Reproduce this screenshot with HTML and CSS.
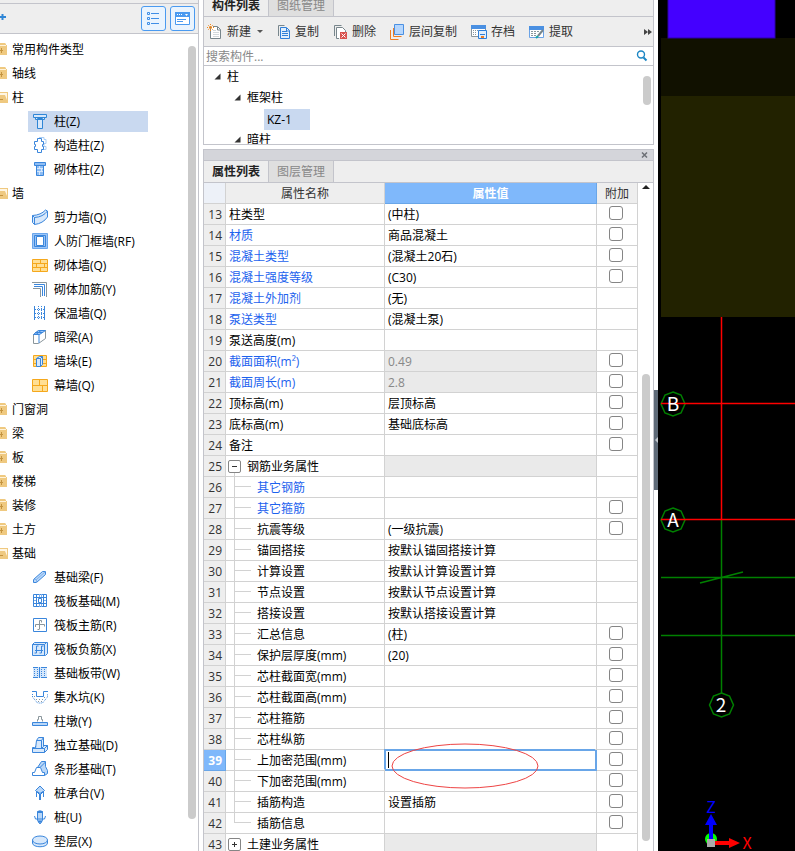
FILE: index.html
```html
<!DOCTYPE html>
<html lang="zh-CN">
<head>
  <meta charset="UTF-8">
  <title>构件属性</title>
  <link rel="stylesheet" href="styles.css">
</head>
<body>

<div class="app">

  <!-- Navigation tree -->
  <nav class="nav">
    <div class="nav-top"></div>
    <div class="nav-bar">
      <svg class="plus" width="7" height="8" viewBox="0 0 7 8"><path d="M0 4h6M2.500 1v6" stroke="#2f86d6" stroke-width="2"/></svg>
      <button type="button" class="view-btn" aria-label="列表">
        <svg width="13" height="14" viewBox="0 0 13 14" fill="none" stroke="#3f8ee6"><path d="M.5 .5h2v2h-2zM.5 5.500h2v2h-2zM.5 10.500h2v2h-2zM4 1.500h8M4 6.500h8M4 11.500h8"/></svg>
      </button>
      <button type="button" class="view-btn" aria-label="窗口">
        <svg width="15" height="13" viewBox="0 0 15 13"><path d="M.5 .5h14v12H.5z" fill="#fff" stroke="#4a9af0"/><path d="M0 0h15v5H0z" fill="#4a9af0"/><path d="M2 2h1v1H2zM4 2h1v1H4zM6 2h1v1H6zM10 2h3l-1.500 2z" fill="#fff"/><path d="M2 7.500h9M2 9.500h6" stroke="#4a9af0"/></svg>
      </button>
    </div>
    <div class="nav-body">
      <ul class="nav-tree">
        <li class="group"><svg class="folder" width="8" height="14" viewBox="0 0 8 14"><path d="M0 1h5l1 1v1h1v10H0z" fill="#efc980"/><path d="M0 3.500h6" stroke="#fff3da"/><path d="M0 8.500h3M1.500 6v5" stroke="#c4933f"/></svg>常用构件类型</li>
        <li class="group"><svg class="folder" width="8" height="14" viewBox="0 0 8 14"><path d="M0 1h5l1 1v1h1v10H0z" fill="#efc980"/><path d="M0 3.500h6" stroke="#fff3da"/><path d="M0 8.500h3M1.500 6v5" stroke="#c4933f"/></svg>轴线</li>
        <li class="group"><svg class="folder" width="8" height="14" viewBox="0 0 8 14"><path d="M0 2h8v11H0z" fill="#efc980"/><path d="M0 3h7v7L5 5H0z" fill="#fff6e4"/><path d="M0 9.500h3" stroke="#c4933f"/></svg>柱</li>
        <li class="item selected"><svg width="16" height="16" viewBox="0 0 16 16" fill="#d7e8fb" stroke="#2f86d6"><path d="M1.500 1.500h13v3h-2v2h-9v-2h-2zM5.500 5.500h5v10h-5z"/><path d="M3 4.500h10"/></svg>柱(Z)</li>
        <li class="item"><svg width="16" height="16" viewBox="0 0 16 16" fill="#fff" stroke="#3a86dc"><path d="M7 .5h5v2h2v4h-2v3h2v3h-3" stroke="#a9cdf4"/><path d="M5.500 1.500h4v3h2v3h-1v2h1v3h-2v3h-4v-3h-3v-3h1v-2h-1v-3h3z"/></svg>构造柱(Z)</li>
        <li class="item"><svg width="16" height="16" viewBox="0 0 16 16" fill="#8fbdf3" stroke="#3a86dc"><path d="M2.500 1.500h11v3h-11zM4.500 4.500h7v10h-7z"/><path d="M5 7.500h6M5 10.500h6M7.500 5v2M9.500 8v2M7.500 11v3" stroke="#d7e8fb"/></svg>砌体柱(Z)</li>
        <li class="group"><svg class="folder" width="8" height="14" viewBox="0 0 8 14"><path d="M0 2h8v11H0z" fill="#efc980"/><path d="M0 3h7v7L5 5H0z" fill="#fff6e4"/><path d="M0 9.500h3" stroke="#c4933f"/></svg>墙</li>
        <li class="item"><svg width="16" height="16" viewBox="0 0 16 16" fill="#d7e8fb" stroke="#3a86dc"><path d="M.5 6.500Q9 6 13.500 1l2 1v6Q11 14.500 2.500 15.500l-2-2z"/><path d="M.5 6.500l2 2Q11 8 15.500 2M2.500 8.500v7" fill="none"/></svg>剪力墙(Q)</li>
        <li class="item"><svg width="16" height="16" viewBox="0 0 16 16" stroke="#3a86dc"><path d="M.5 .5h15v15H.5z" fill="#9cc5f7" stroke="#6aa6ec"/><path d="M2.500 2.500h11v11h-11z" fill="#9cc5f7"/><path d="M4.500 3.500h7v9h-7z" fill="#fff"/></svg>人防门框墙(RF)</li>
        <li class="item"><svg width="16" height="14" viewBox="0 0 16 14" fill="#ffdf94" stroke="#f5a81c"><path d="M.5 1.500h15v12H.5z"/><path d="M0 5.500h16M0 9.500h16M8.500 1v4M4.500 5v4M12.500 5v4M8.500 9v4"/></svg>砌体墙(Q)</li>
        <li class="item"><svg width="16" height="16" viewBox="0 0 16 16" fill="none"><path d="M0 1.500h14.500V16M1 7.500h7.500V16" stroke="#8a969c"/><path d="M2 3.500h10.500V15M2 5.500h8.500V15" stroke="#3a86dc"/></svg>砌体加筋(Y)</li>
        <li class="item"><svg width="16" height="16" viewBox="0 0 16 16" stroke="#3a86dc"><path d="M2.500 1v14M12.500 1v14"/><path d="M6.500 1v14M9.500 1v14M3 4.500h10M3 8.500h10M3 12.500h10" stroke-dasharray="1 1"/></svg>保温墙(Q)</li>
        <li class="item"><svg width="16" height="16" viewBox="0 0 16 16"><path d="M1.500 5.500l5-4h7v8l-7 5h-5z" fill="#fff" stroke="#8a969c"/><path d="M1.500 5.500l5-4h7l-6 4zM7 5v9M3 3.500h8M4 5.500l5-4" fill="#9cc5f7" stroke="#3a86dc"/></svg>暗梁(A)</li>
        <li class="item"><svg width="16" height="14" viewBox="0 0 16 14"><path d="M1.500 1.500h13v11h-13z" fill="#ffdf94" stroke="#f5a81c"/><path d="M1 5.500h14M1 9.500h14" stroke="#f5a81c"/><path d="M4.500 4.500l3-2h3v8l-2 2h-4zM4.500 4.500h4v8M8.500 4.500l2-2" fill="#d7e8fb" stroke="#3a86dc"/></svg>墙垛(E)</li>
        <li class="item"><svg width="16" height="14" viewBox="0 0 16 14" fill="#ffdf94" stroke="#f5a81c"><path d="M.5 1.500h15v12H.5z"/><path d="M0 7.500h16M7.500 1v6M10.500 7v6"/></svg>幕墙(Q)</li>
        <li class="group"><svg class="folder" width="8" height="14" viewBox="0 0 8 14"><path d="M0 1h5l1 1v1h1v10H0z" fill="#efc980"/><path d="M0 3.500h6" stroke="#fff3da"/><path d="M0 8.500h3M1.500 6v5" stroke="#c4933f"/></svg>门窗洞</li>
        <li class="group"><svg class="folder" width="8" height="14" viewBox="0 0 8 14"><path d="M0 1h5l1 1v1h1v10H0z" fill="#efc980"/><path d="M0 3.500h6" stroke="#fff3da"/><path d="M0 8.500h3M1.500 6v5" stroke="#c4933f"/></svg>梁</li>
        <li class="group"><svg class="folder" width="8" height="14" viewBox="0 0 8 14"><path d="M0 1h5l1 1v1h1v10H0z" fill="#efc980"/><path d="M0 3.500h6" stroke="#fff3da"/><path d="M0 8.500h3M1.500 6v5" stroke="#c4933f"/></svg>板</li>
        <li class="group"><svg class="folder" width="8" height="14" viewBox="0 0 8 14"><path d="M0 1h5l1 1v1h1v10H0z" fill="#efc980"/><path d="M0 3.500h6" stroke="#fff3da"/><path d="M0 8.500h3M1.500 6v5" stroke="#c4933f"/></svg>楼梯</li>
        <li class="group"><svg class="folder" width="8" height="14" viewBox="0 0 8 14"><path d="M0 1h5l1 1v1h1v10H0z" fill="#efc980"/><path d="M0 3.500h6" stroke="#fff3da"/><path d="M0 8.500h3M1.500 6v5" stroke="#c4933f"/></svg>装修</li>
        <li class="group"><svg class="folder" width="8" height="14" viewBox="0 0 8 14"><path d="M0 1h5l1 1v1h1v10H0z" fill="#efc980"/><path d="M0 3.500h6" stroke="#fff3da"/><path d="M0 8.500h3M1.500 6v5" stroke="#c4933f"/></svg>土方</li>
        <li class="group"><svg class="folder" width="8" height="14" viewBox="0 0 8 14"><path d="M0 2h8v11H0z" fill="#efc980"/><path d="M0 3h7v7L5 5H0z" fill="#fff6e4"/><path d="M0 9.500h3" stroke="#c4933f"/></svg>基础</li>
        <li class="item"><svg width="16" height="16" viewBox="0 0 16 16" fill="#b9d7f8" stroke="#3a86dc"><path d="M1.500 10.500l9-8h3v3l-9 8h-3z"/><path d="M1.500 10.500h3v3M4.500 10.500l9-8" fill="none" stroke="#7fb0ec"/></svg>基础梁(F)</li>
        <li class="item"><svg width="16" height="16" viewBox="0 0 16 16" fill="none" stroke="#3a86dc"><path d="M1.500 1.500h13v12h-13zM4.500 1v13M11.500 1v13M1 4.500h14M1 10.500h14M6.500 5.500h3v4h-3z"/><path d="M7.500 1v3M9.500 1v3M7.500 11v3M9.500 11v3M2 7.500h2M12 7.500h2" stroke="#7fb0ec"/></svg>筏板基础(M)</li>
        <li class="item"><svg width="16" height="16" viewBox="0 0 16 16" fill="none"><path d="M1.500 1.500h13v13h-13z" stroke="#3a86dc"/><path d="M7.500 12V3.500h2v2M3.500 10V7.500h9v2M5.500 12.500h2" stroke="#8a969c"/></svg>筏板主筋(R)</li>
        <li class="item"><svg width="16" height="16" viewBox="0 0 16 16" fill="#d7e8fb" stroke="#3a86dc"><path d="M.5 3.500l2-2h13v11l-2 2H.5z"/><path d="M.5 3.500h12v11M12.500 3.500l2-2M4.500 5v7M9.500 5v7M3 9.500h8M4.500 5h2M4.500 12h-2M9.500 5h2M9.500 12h-2" fill="none"/></svg>筏板负筋(X)</li>
        <li class="item"><svg width="16" height="14" viewBox="0 0 16 14" stroke="#3a86dc"><path d="M1 1h14v11H1z" fill="#d7e8fb" stroke="none"/><path d="M1 1.500h5M9 1.500h6M1 11.500h5M9 11.500h6"/><path d="M2.500 1v11M5.500 1v11M9.500 1v11M12.500 1v11" stroke-dasharray="1 1"/><path d="M7.500 1v11"/></svg>基础板带(W)</li>
        <li class="item"><svg width="16" height="16" viewBox="0 0 16 16" fill="none"><path d="M0 2.500h4.500v5h7v-5H16" stroke="#3a86dc"/><path d="M.5 5v3l5 6h5l5-6V5" stroke="#3a86dc" stroke-dasharray="1 1"/><path d="M2 7.500h2M4 10.500h8M6 12.500h4M12 8.500h2" stroke="#8a969c" stroke-dasharray="1 2"/></svg>集水坑(K)</li>
        <li class="item"><svg width="16" height="12" viewBox="0 0 16 12"><path d="M5.500 6.500v-2h1v-3h3v3h1v2" fill="#fff" stroke="#8a969c"/><path d="M.5 7.500h15v3H.5z" fill="#b9d7f8" stroke="#3a86dc"/></svg>柱墩(Y)</li>
        <li class="item"><svg width="16" height="17" viewBox="0 0 16 17" fill="#d7e8fb" stroke="#3a86dc"><path d="M.5 11.500h2l2-2h11v4l-3 3H.5z"/><path d="M.5 12.500h12v4M12.500 12.500l3-3" fill="none"/><path d="M4.500 4.500l2-3h5v9l-2 2h-6zM4.500 4.500h5v8M9.500 4.500l2-3"/></svg>独立基础(D)</li>
        <li class="item"><svg width="16" height="17" viewBox="0 0 16 17" fill="#b9d7f8" stroke="#3a86dc"><path d="M5.500 7.500l4-6h4v5l2 4v3l-3 2z"/><path d="M.5 15.500v-3h2l2-5h4l2 5h2v3z" fill="#fff"/><path d="M8.500 7l5-5" fill="none"/></svg>条形基础(T)</li>
        <li class="item"><svg width="16" height="16" viewBox="0 0 16 16" fill="#b9d7f8" stroke="#3a86dc"><path d="M8 1l4.500 4.500L8 10 3.500 5.500z"/><path d="M4.500 7v5M11.500 7v5M7.500 10v5M8.500 10v5M5 6.500l3 2 3-2" fill="none"/></svg>桩承台(V)</li>
        <li class="item"><svg width="16" height="16" viewBox="0 0 16 16" fill="#b9d7f8" stroke="#3a86dc"><path d="M5.500 2.500Q8 1 10.500 2.500v9L8 15l-2.500-3.500z"/><path d="M5.500 3h5M6 12.500h4" stroke-width="2"/><path d="M2.500 7l1 3h9l1-3" fill="none"/></svg>桩(U)</li>
        <li class="item"><svg width="16" height="14" viewBox="0 0 16 14" fill="#d7e8fb" stroke="#3a86dc"><path d="M.5 6v3c0 5 15 5 15 0V6"/><ellipse cx="8" cy="6" rx="7.500" ry="4"/></svg>垫层(X)</li>
      </ul>
      <div class="thumb nav-thumb"></div>
    </div>
  </nav>

  <main class="middle">

    <!-- Component list -->
    <section class="panel list-panel">
      <div class="tabs tabs-clipped">
        <button type="button" class="tab active">构件列表</button>
        <button type="button" class="tab">图纸管理</button>
      </div>
      <div class="toolbar">
        <button type="button" class="tool"><svg width="16" height="16" viewBox="0 0 16 16"><path d="M3.500 3v11.500h10v-9l-3-3H6" fill="#fff" stroke="#78868c"/><path d="M10.500 3v3h3" fill="none" stroke="#78868c"/><path d="M6 6.500h3M6 8.500h6M6 10.500h6M6 12.500h6" stroke="#d3d9dc"/><path d="M1 1l5 5M6 1L1 6M3.500 0v7M0 3.500h7" stroke="#f28a1c" stroke-dasharray="1 1"/></svg>新建<span class="caret-down"></span></button>
        <button type="button" class="tool"><svg width="14" height="16" viewBox="0 0 14 16"><path d="M1.500 12V1.500h6" fill="none" stroke="#78868c"/><path d="M3.500 3.500h6l3 3v8h-9z" fill="#e1eefc" stroke="#2f7fd8"/><path d="M5 7.500h5M5 9.500h6M5 11.500h6M9.500 4v3h3" fill="none" stroke="#2f7fd8"/></svg>复制</button>
        <button type="button" class="tool"><svg width="15" height="16" viewBox="0 0 15 16" fill="#fff" stroke="#78868c"><path d="M1.500 12V1.500h7" fill="none"/><path d="M6 14.500H3.500v-11h6l3 3v2"/><path d="M7 8h7v7H7z" fill="#d9534f" stroke="none"/><path d="M8.500 9.500l4 4M12.500 9.500l-4 4" stroke="#fff"/></svg>删除</button>
        <button type="button" class="tool"><svg width="15" height="16" viewBox="0 0 15 16" fill="none"><path d="M.5 6v9.500h8M3.500 4v8.500h8" stroke="#ee7d23"/><path d="M4.500 .5h9v10h-9z" fill="#b5d6fd" stroke="#4a90e2"/></svg>层间复制</button>
        <button type="button" class="tool"><svg width="16" height="16" viewBox="0 0 16 16"><path d="M.5 1.500h14v11H.5z" fill="#fff" stroke="#8a969c"/><path d="M0 1h15v4H0z" fill="#4a90e2"/><path d="M2 6.500h5M2 8.500h4M2 10.500h4" stroke="#8a969c" stroke-dasharray="1 1"/><path d="M7.500 6.500h8v8h-8z" fill="#e1eefc" stroke="#2f7fd8"/><path d="M9 10.500h5" stroke="#2f7fd8"/><path d="M10 12h3v2h-3z" fill="#ee7d23"/></svg>存档</button>
        <button type="button" class="tool"><svg width="16" height="14" viewBox="0 0 16 14"><path d="M.5 1.500h14v11H.5z" fill="#fff" stroke="#6ba3e6"/><path d="M0 1h15v4H0z" fill="#4a90e2"/><path d="M2 6.500h8M2 8.500h6M2 10.500h5" stroke="#8a969c" stroke-dasharray="2 1"/><path d="M14 5l-5 6" stroke="#78868c" stroke-width="2"/><path d="M9 11l-2 2" stroke="#1ba5a5" stroke-width="2"/></svg>提取</button>
        <button type="button" class="more" aria-label="更多"><svg width="8" height="6" viewBox="0 0 8 6" fill="#444"><path d="M0 0l4 3-4 3zM4 0l4 3-4 3z"/></svg></button>
      </div>
      <div class="search">
        <input type="text" placeholder="搜索构件..." aria-label="搜索构件">
        <svg width="12" height="12" viewBox="0 0 12 12" fill="none" stroke="#1c86c4"><circle cx="5" cy="4.500" r="3.500" stroke-width="1.400"/><path d="M7.500 7.500l3 3" stroke-width="2"/></svg>
      </div>
      <div class="list-body">
        <ul class="list-tree">
          <li class="level1"><svg width="7" height="7" viewBox="0 0 7 7"><path d="M6.500 .5v6h-6z" fill="#333"/></svg>柱</li>
          <li class="level2"><svg width="7" height="7" viewBox="0 0 7 7"><path d="M6.500 .5v6h-6z" fill="#333"/></svg>框架柱</li>
          <li class="level3"><span>KZ-1</span></li>
          <li class="level2"><svg width="7" height="7" viewBox="0 0 7 7"><path d="M6.500 .5v6h-6z" fill="#333"/></svg>暗柱</li>
        </ul>
        <div class="thumb list-thumb"></div>
      </div>
    </section>

    <!-- Properties -->
    <section class="panel prop-panel">
      <div class="title-bar">
        <button type="button" aria-label="关闭"><svg width="7" height="6" viewBox="0 0 7 6"><path d="M1 .5l5 5M6 .5l-5 5" stroke="#6d7076" stroke-width="1.500"/></svg></button>
      </div>
      <div class="tabs">
        <button type="button" class="tab active">属性列表</button>
        <button type="button" class="tab">图层管理</button>
      </div>
      <div class="prop-body">
        <table class="props">
          <colgroup><col class="col-no"><col class="col-name"><col><col class="col-extra"></colgroup>
          <thead>
            <tr><th class="corner"></th><th>属性名称</th><th class="current">属性值</th><th>附加</th></tr>
          </thead>
          <tbody>
            <tr><th>13</th><td>柱类型</td><td>(中柱)</td><td class="extra"><input type="checkbox" aria-label="附加 柱类型"></td></tr>
            <tr><th>14</th><td class="blue">材质</td><td>商品混凝土</td><td class="extra"><input type="checkbox" aria-label="附加 材质"></td></tr>
            <tr><th>15</th><td class="blue">混凝土类型</td><td>(混凝土20石)</td><td class="extra"><input type="checkbox" aria-label="附加 混凝土类型"></td></tr>
            <tr><th>16</th><td class="blue">混凝土强度等级</td><td>(C30)</td><td class="extra"><input type="checkbox" aria-label="附加 混凝土强度等级"></td></tr>
            <tr><th>17</th><td class="blue">混凝土外加剂</td><td>(无)</td><td></td></tr>
            <tr><th>18</th><td class="blue">泵送类型</td><td>(混凝土泵)</td><td></td></tr>
            <tr><th>19</th><td>泵送高度(m)</td><td></td><td></td></tr>
            <tr><th>20</th><td class="blue">截面面积(m²)</td><td class="locked">0.49</td><td class="extra"><input type="checkbox" aria-label="附加 截面面积"></td></tr>
            <tr><th>21</th><td class="blue">截面周长(m)</td><td class="locked">2.8</td><td class="extra"><input type="checkbox" aria-label="附加 截面周长"></td></tr>
            <tr><th>22</th><td>顶标高(m)</td><td>层顶标高</td><td class="extra"><input type="checkbox" aria-label="附加 顶标高"></td></tr>
            <tr><th>23</th><td>底标高(m)</td><td>基础底标高</td><td class="extra"><input type="checkbox" aria-label="附加 底标高"></td></tr>
            <tr><th>24</th><td>备注</td><td></td><td class="extra"><input type="checkbox" aria-label="附加 备注"></td></tr>
            <tr><th>25</th><td class="parent open"><button type="button" class="toggle" aria-label="收起"><svg width="7" height="7" viewBox="0 0 7 7"><path d="M1 3.500h5" stroke="#333"/></svg></button>钢筋业务属性</td><td class="locked"></td><td></td></tr>
            <tr><th>26</th><td class="child blue">其它钢筋</td><td></td><td></td></tr>
            <tr><th>27</th><td class="child blue">其它箍筋</td><td></td><td class="extra"><input type="checkbox" aria-label="附加 其它箍筋"></td></tr>
            <tr><th>28</th><td class="child">抗震等级</td><td>(一级抗震)</td><td class="extra"><input type="checkbox" aria-label="附加 抗震等级"></td></tr>
            <tr><th>29</th><td class="child">锚固搭接</td><td>按默认锚固搭接计算</td><td></td></tr>
            <tr><th>30</th><td class="child">计算设置</td><td>按默认计算设置计算</td><td></td></tr>
            <tr><th>31</th><td class="child">节点设置</td><td>按默认节点设置计算</td><td></td></tr>
            <tr><th>32</th><td class="child">搭接设置</td><td>按默认搭接设置计算</td><td></td></tr>
            <tr><th>33</th><td class="child">汇总信息</td><td>(柱)</td><td class="extra"><input type="checkbox" aria-label="附加 汇总信息"></td></tr>
            <tr><th>34</th><td class="child">保护层厚度(mm)</td><td>(20)</td><td class="extra"><input type="checkbox" aria-label="附加 保护层厚度"></td></tr>
            <tr><th>35</th><td class="child">芯柱截面宽(mm)</td><td></td><td class="extra"><input type="checkbox" aria-label="附加 芯柱截面宽"></td></tr>
            <tr><th>36</th><td class="child">芯柱截面高(mm)</td><td></td><td class="extra"><input type="checkbox" aria-label="附加 芯柱截面高"></td></tr>
            <tr><th>37</th><td class="child">芯柱箍筋</td><td></td><td class="extra"><input type="checkbox" aria-label="附加 芯柱箍筋"></td></tr>
            <tr><th>38</th><td class="child">芯柱纵筋</td><td></td><td class="extra"><input type="checkbox" aria-label="附加 芯柱纵筋"></td></tr>
            <tr><th class="current">39</th><td class="child">上加密范围(mm)</td><td class="editing"><input type="text" aria-label="上加密范围(mm)"><svg class="mark" width="148" height="46" viewBox="0 0 148 46"><ellipse cx="74" cy="23" rx="73" ry="22" fill="none" stroke="#ee4444"/></svg></td><td class="extra"><input type="checkbox" aria-label="附加 上加密范围"></td></tr>
            <tr><th>40</th><td class="child">下加密范围(mm)</td><td></td><td class="extra"><input type="checkbox" aria-label="附加 下加密范围"></td></tr>
            <tr><th>41</th><td class="child">插筋构造</td><td>设置插筋</td><td class="extra"><input type="checkbox" aria-label="附加 插筋构造"></td></tr>
            <tr><th>42</th><td class="child last">插筋信息</td><td></td><td class="extra"><input type="checkbox" aria-label="附加 插筋信息"></td></tr>
            <tr><th>43</th><td class="parent"><button type="button" class="toggle" aria-label="展开"><svg width="7" height="7" viewBox="0 0 7 7"><path d="M1 3.500h5M3.500 1v5" stroke="#333"/></svg></button>土建业务属性</td><td class="locked"></td><td></td></tr>
          </tbody>
        </table>
        <div class="prop-scroll">
          <svg width="8" height="4" viewBox="0 0 8 4"><path d="M4 0l4 4H0z" fill="#222"/></svg>
          <div class="thumb prop-thumb"></div>
        </div>
      </div>
    </section>
  </main>

  <div class="splitter">
    <button type="button" aria-label="折叠"><svg width="3" height="6" viewBox="0 0 3 6"><path d="M3 0v6L0 3z" fill="#c3c9cf"/></svg></button>
  </div>

  <!-- Drawing area -->
  <div class="canvas">
    <svg class="drawing" width="137" height="730">
      <rect x="3" y="38" width="2000" height="58" fill="#111100"/>
      <rect x="3" y="96" width="2000" height="221" fill="#222200"/>
      <rect x="10" y="-1" width="107" height="39" fill="#4400ff" stroke="#2c00a8"/>
      <g stroke="#008000" stroke-width="1.500" fill="none">
        <path d="M63.500 520v173M3 577.500h2000M3 635.500h2000M42 583l43-11"/>
        <path d="M15 392l8 3 4 9-4 9-8 3-8-3-4-9 4-9z"/>
        <path d="M15 508l8 3 4 9-4 9-8 3-8-3-4-9 4-9z"/>
        <path d="M63.500 693l8 3 4 9-4 9-8 3-8-3-4-9 4-9z"/>
      </g>
      <path d="M63.500 317v203M3 403.500h2000M3 519.500h2000" stroke="#ff0000" stroke-width="1.500"/>
      <g class="axis-label" fill="#fff" text-anchor="middle">
        <text x="15" y="411">B</text>
        <text x="15" y="527">A</text>
        <text x="63" y="712">2</text>
      </g>
    </svg>
    <svg class="gizmo" width="50" height="56" viewBox="0 0 50 56">
      <circle cx="8" cy="44" r="6" fill="#00ff00"/>
      <path d="M6 45V30H2l6-11 6 11h-4v15z" fill="#0000ff"/>
      <path d="M12 46h14v-3l11 5-11 5v-3H12z" fill="#ff0000"/>
      <path d="M4 44h8v8H4z" fill="#aaa"/>
      <text x="8" y="18" fill="#0000ff" text-anchor="middle">Z</text>
      <text x="44" y="54" fill="#ff0000" text-anchor="middle">X</text>
    </svg>
  </div>

</div>

</body>
</html>
```
FILE: styles.css
```css
* {
  box-sizing: border-box;
}

body {
  margin: 0;
  font-family: "Open Sans", "Noto Sans CJK SC", sans-serif;
  font-size: 12px;
  line-height: 20px;
  color: #000;
  background: #fff;
}

button {
  font: inherit;
  color: inherit;
  background: none;
  border: none;
  padding: 0;
  cursor: pointer;
}

ul {
  list-style: none;
  margin: 0;
  padding: 0;
}

svg {
  display: block;
  flex: none;
}

.app {
  display: flex;
  height: 100vh;
  overflow: hidden;
}

.thumb {
  width: 8px;
  border-radius: 4px;
  background: #cbcbcb;
}

/* Navigation tree */
.nav {
  display: flex;
  flex-direction: column;
  flex: 0 0 199px;
  border-right: 1px solid #c3c4cb;
}

.nav-top {
  flex: none;
  height: 4px;
  background: #eee;
  border-bottom: 1px solid #c3c4cb;
}

.nav-bar {
  display: flex;
  align-items: center;
  flex: none;
  gap: 4px;
  height: 30px;
  padding-right: 3px;
  background: #eee;
  border-bottom: 1px solid #c3c4cb;
}

.plus {
  margin: 0 auto 4px 0;
}

.view-btn {
  display: flex;
  align-items: center;
  justify-content: center;
  width: 25px;
  height: 25px;
  background: #eaf4fe;
  border: 1px solid #4a9af0;
  border-radius: 3px;
}

.nav-body {
  display: flex;
  flex: 1;
  min-height: 0;
}

.nav-tree {
  display: flex;
  flex-direction: column;
  flex: 1;
  padding-top: 3px;
}

.nav-tree li {
  display: flex;
  align-items: center;
  flex: none;
}

.group {
  gap: 4px;
  height: 24px;
  padding-top: 2px;
}

.folder {
  margin-bottom: 2px;
}

.item {
  gap: 6px;
  width: 120px;
  height: 21px;
  margin: 2px 0 1px 28px;
  padding-left: 4px;
  white-space: nowrap;
}

.item svg {
  margin-bottom: 2px;
}

.selected {
  background: #c9d9f0;
}

.nav-thumb {
  margin: 12px 2px 32px 0;
}

/* Middle column */
.middle {
  display: flex;
  flex-direction: column;
  flex: 0 0 451px;
  gap: 4px;
  margin-left: 4px;
}

.panel {
  display: flex;
  flex-direction: column;
  border: 1px solid #c3c4cb;
}

.list-panel {
  flex: none;
  border-top: none;
}

.prop-panel {
  flex: 1;
  min-height: 0;
  border-bottom: none;
}

.tabs {
  display: flex;
  align-items: flex-end;
  flex: none;
  height: 22px;
  overflow: hidden;
  background: #eee;
  border-bottom: 1px solid #c3c4cb;
}

.tabs-clipped {
  height: 17px;
}

.tab {
  flex: none;
  width: 65px;
  height: 21px;
  color: #888;
  background: #dfdfdf;
  border-right: 1px solid #c3c4cb;
}

.tab.active {
  color: #222;
  font-weight: bold;
  background: #eee;
}

.toolbar {
  display: flex;
  align-items: center;
  gap: 14px;
  height: 30px;
  padding: 0 1px 0 3px;
  color: #333;
  background: #eee;
  border-bottom: 1px solid #c3c4cb;
}

.tool {
  display: flex;
  align-items: center;
  gap: 4px;
  white-space: nowrap;
}

.caret-down {
  margin-left: 2px;
  border: 3px solid transparent;
  border-top-color: #555;
  border-bottom: none;
}

.more {
  margin-left: auto;
}

.search {
  display: flex;
  align-items: center;
  height: 19px;
  padding: 0 5px 0 2px;
  border-bottom: 1px solid #c3c4cb;
}

.search input {
  flex: 1;
  min-width: 0;
  height: 18px;
  padding: 2px 0 0;
  border: none;
  outline: none;
  font: inherit;
}

.search input::placeholder {
  color: #888;
}

.list-body {
  display: flex;
  height: 78px;
  overflow: hidden;
}

.list-tree {
  flex: 1;
}

.list-tree li {
  display: flex;
  align-items: center;
  gap: 6px;
  height: 21px;
  padding-top: 1px;
}

.list-tree svg {
  margin-bottom: 2px;
}

.list-tree .level1 {
  padding-left: 10px;
}

.list-tree .level2 {
  padding-left: 30px;
}

.list-tree .level3 {
  padding-left: 60px;
}

.level3 span {
  width: 46px;
  padding-left: 3px;
  line-height: 21px;
  background: #c9d9f0;
}

.list-thumb {
  height: 29px;
  margin: 10px 2px 0 0;
}

/* Properties */
.title-bar {
  display: flex;
  align-items: center;
  justify-content: flex-end;
  flex: none;
  height: 11px;
  padding-right: 5px;
  background: #d4d5da;
  border-bottom: 1px solid #c3c4cb;
}

.prop-body {
  display: flex;
  align-items: flex-start;
  flex: 1;
  min-height: 0;
  overflow: hidden;
}

.props {
  flex: 1;
  table-layout: fixed;
  border-spacing: 0;
}

.col-no {
  width: 22px;
}

.col-name {
  width: 159px;
}

.col-extra {
  width: 41px;
}

.props th,
.props td {
  height: 21px;
  padding: 2px 3px 0;
  border-right: 1px solid #d2d2d2;
  border-bottom: 1px solid #d2d2d2;
  line-height: 18px;
  white-space: nowrap;
}

.props th {
  font-weight: normal;
  color: #333;
  background: #eee;
}

.props tbody th {
  text-align: right;
}

.props thead .corner {
  background: #edf1f8;
}

.props .current {
  color: #fff;
  background: #7fb8fb;
  border-color: #69a6e8;
  font-weight: bold;
}

.props .blue {
  color: #1c62ee;
}

.props .locked {
  color: #888;
  background: #eaeaea;
}

.props .extra {
  padding: 0 2px 0 0;
}

.extra input {
  appearance: none;
  display: block;
  width: 14px;
  height: 14px;
  margin: 0 auto 2px;
  border: 1px solid #858585;
  border-radius: 3px;
  background: #fff;
}

.props .parent {
  padding-left: 2px;
}

.open {
  background: linear-gradient(#d2d2d2, #d2d2d2) 8px 100% / 1px 5px no-repeat;
}

.toggle {
  display: inline-flex;
  align-items: center;
  justify-content: center;
  width: 13px;
  height: 13px;
  margin-right: 6px;
  vertical-align: middle;
  margin-bottom: 2px;
  border: 1px solid #858585;
  border-radius: 2px;
  background: #fff;
}

.props .child {
  padding-left: 31px;
  background:
    linear-gradient(#d2d2d2, #d2d2d2) 8px 0 / 1px 100% no-repeat,
    linear-gradient(#d2d2d2, #d2d2d2) 8px 9px / 17px 1px no-repeat;
}

.props .last {
  background:
    linear-gradient(#d2d2d2, #d2d2d2) 8px 0 / 1px 10px no-repeat,
    linear-gradient(#d2d2d2, #d2d2d2) 8px 9px / 17px 1px no-repeat;
}

.props .editing {
  position: relative;
  padding: 0;
  border-color: #69a6e8;
}

.editing input {
  display: block;
  width: 100%;
  height: 20px;
  border: 1px solid #69a6e8;
  outline: none;
  box-shadow: -1px -1px #69a6e8;
  background: linear-gradient(#000, #000) 2px 1px / 1px 16px no-repeat;
  font: inherit;
}

/* hand-drawn ring around the cell being filled in */
.mark {
  position: absolute;
  top: -7px;
  left: 6px;
  pointer-events: none;
}

.prop-scroll {
  display: flex;
  flex-direction: column;
  align-items: center;
  align-self: stretch;
  flex: 0 0 15px;
  padding: 2px 0 10px;
}

.prop-thumb {
  flex: 1;
  margin-top: 185px;
}

/* Drawing area */
.splitter {
  display: flex;
  flex: 0 0 4px;
  padding-top: 390px;
}

.splitter button {
  display: flex;
  align-items: center;
  justify-content: flex-end;
  width: 4px;
  height: 100px;
  background: #5f6b78;
}

.canvas {
  display: flex;
  flex-direction: column;
  justify-content: space-between;
  flex: 1;
  min-width: 0;
  overflow: hidden;
  background: #000;
}

.drawing {
  overflow: visible;
}

.axis-label {
  font-family: "Noto Sans CJK SC", sans-serif;
  font-size: 19px;
}

.gizmo {
  margin-left: 45px;
  overflow: visible;
  font-family: "Noto Sans CJK SC", sans-serif;
  font-size: 16px;
}
```
